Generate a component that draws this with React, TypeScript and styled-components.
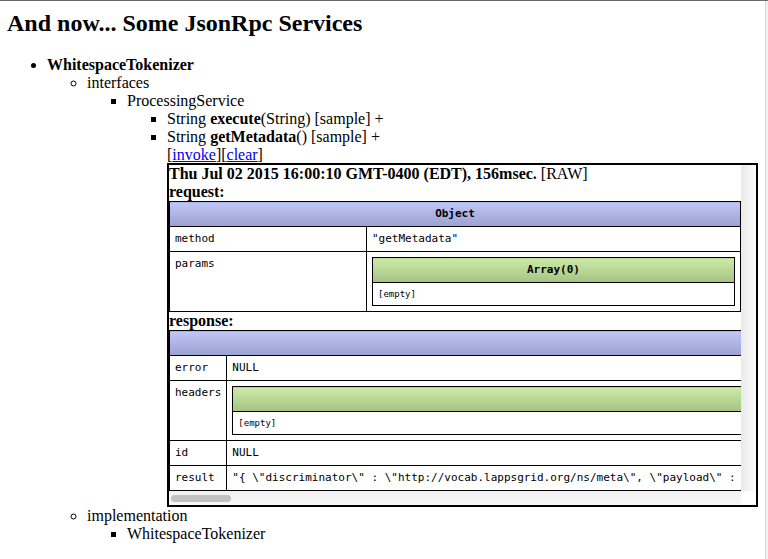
import React from "react";
import styled, { createGlobalStyle } from "styled-components";

const GlobalStyle = createGlobalStyle`
  html {
    overflow: hidden;
    border-top: 1px solid #6b6b6b;
    background: linear-gradient(
      to right,
      #ffffff 765px,
      #d6d6d6 765px,
      #d6d6d6 766px,
      #f1f1f1 766px
    );
  }
  body {
    margin: 0 10px 0 7px;
    font-family: "Liberation Serif", "Times New Roman", serif;
    font-size: 16px;
    color: #000;
  }
`;

const RESULT = String.raw`"{ \"discriminator\" : \"http://vocab.lappsgrid.org/ns/meta\", \"payload\" : { \"$schema\" : \"http://vocab.lappsgrid.org/schema/1.0.0/metadata-schema.json\", \"name\" : \"org.lappsgrid.example.java.whitespacetokenizer.WhitespaceTokenizer:1.0.0-SNAPSHOT\", \"version\" : \"1.0.0-SNAPSHOT\", \"toolVersion\" : \"1.0.0-SNAPSHOT\", \"vendor\" : \"http://www.lappsgrid.org\", \"allow\" : \"http://vocab.lappsgrid.org/ns/allow#any\", \"license\" : \"http://vocab.lappsgrid.org/ns/license#apache-2.0\", \"requires\" : { \"language\" : [ \"en\" ], \"format\" : [ \"http://vocab.lappsgrid.org/ns/media/text\", \"http://vocab.lappsgrid.org/ns/media/jsonld#lif\" ], \"annotations\" : [ ] }, \"produces\" : { \"language\" : [ \"en\" ], \"format\" : [ \"http://vocab.lappsgrid.org/ns/media/jsonld#lif\" ], \"annotations\" : [ \"http://vocab.lappsgrid.org/Token\" ] } } }"`;

const App = () => {
  return (
    <>
      <GlobalStyle />
      <S.Title>And now... Some JsonRpc Services</S.Title>
      <S.Tree $marker="disc">
        <S.Item>
          <b>WhitespaceTokenizer</b>
          <S.Tree $marker="circle">
            <S.Item>
              interfaces
              <S.Tree $marker="square">
                <S.Item>
                  ProcessingService
                  <S.Tree $marker="square">
                    <S.Item>
                      String <b>execute</b>(String) [sample] +
                    </S.Item>
                    <S.Item>
                      String <b>getMetadata</b>() [sample] +
                      <S.Actions>
                        [<S.Link href="#">invoke</S.Link>][
                        <S.Link href="#">clear</S.Link>]
                      </S.Actions>
                      <S.ResultBox>
                        <S.Viewport>
                          <S.Line>
                            <b>
                              Thu Jul 02 2015 16:00:10 GMT-0400 (EDT), 156msec.
                            </b>{" "}
                            [RAW]
                          </S.Line>
                          <S.Line>
                            <b>request:</b>
                          </S.Line>
                          <S.DataTable $fill>
                            <tbody>
                              <tr>
                                <S.Head colSpan={2} $tone="blue">
                                  Object
                                </S.Head>
                              </tr>
                              <tr>
                                <S.Key $width={186}>method</S.Key>
                                <S.Value>"getMetadata"</S.Value>
                              </tr>
                              <tr>
                                <S.Key $width={186}>params</S.Key>
                                <S.Value>
                                  <S.DataTable $fill>
                                    <tbody>
                                      <tr>
                                        <S.Head $tone="green">Array(0)</S.Head>
                                      </tr>
                                      <tr>
                                        <S.Empty>[empty]</S.Empty>
                                      </tr>
                                    </tbody>
                                  </S.DataTable>
                                </S.Value>
                              </tr>
                            </tbody>
                          </S.DataTable>
                          <S.Line>
                            <b>response:</b>
                          </S.Line>
                          <S.DataTable>
                            <tbody>
                              <tr>
                                <S.Head colSpan={2} $tone="blue">
                                  Object
                                </S.Head>
                              </tr>
                              <tr>
                                <S.Key>error</S.Key>
                                <S.Value>NULL</S.Value>
                              </tr>
                              <tr>
                                <S.Key>headers</S.Key>
                                <S.Value>
                                  <S.DataTable $fill>
                                    <tbody>
                                      <tr>
                                        <S.Head $tone="green">Object</S.Head>
                                      </tr>
                                      <tr>
                                        <S.Empty>[empty]</S.Empty>
                                      </tr>
                                    </tbody>
                                  </S.DataTable>
                                </S.Value>
                              </tr>
                              <tr>
                                <S.Key>id</S.Key>
                                <S.Value>NULL</S.Value>
                              </tr>
                              <tr>
                                <S.Key>result</S.Key>
                                <S.Value>{RESULT}</S.Value>
                              </tr>
                            </tbody>
                          </S.DataTable>
                        </S.Viewport>
                        <S.VTrack />
                        <S.HTrack>
                          <S.Thumb />
                        </S.HTrack>
                        <S.Corner />
                      </S.ResultBox>
                    </S.Item>
                  </S.Tree>
                </S.Item>
              </S.Tree>
            </S.Item>
            <S.Item>
              implementation
              <S.Tree $marker="square">
                <S.Item>WhitespaceTokenizer</S.Item>
              </S.Tree>
            </S.Item>
          </S.Tree>
        </S.Item>
      </S.Tree>
    </>
  );
};

export default App;

const S = {
  Title: styled.h1`
    font-size: 24px;
    font-weight: bold;
    margin: 9px 0 19px;
    line-height: 27px;
  `,
  Tree: styled.ul<{ $marker: string }>`
    list-style-type: ${(props) => props.$marker};
    margin: 0;
    padding-left: 40px;
  `,
  Item: styled.li`
    line-height: 18px;
  `,
  Actions: styled.div`
    line-height: 17px;
  `,
  Link: styled.a`
    color: #0000ee;
    text-decoration: underline;
  `,
  ResultBox: styled.div`
    display: grid;
    grid-template-columns: minmax(0, 1fr) 15px;
    grid-template-rows: auto 14px;
    border: 2px solid #000;
  `,
  Viewport: styled.div`
    overflow: hidden;
    min-width: 0;
  `,
  VTrack: styled.div`
    background: linear-gradient(to right, #e9e9e9, #fcfcfc);
  `,
  HTrack: styled.div`
    padding: 4px 2px 3px;
    background: linear-gradient(#f0f0f0, #f8f8f8);
  `,
  Thumb: styled.div`
    width: 60px;
    height: 7px;
    border-radius: 4px;
    background: #c1c1c1;
  `,
  Corner: styled.div`
    background: #fff;
  `,
  Line: styled.div`
    line-height: 18px;
    white-space: nowrap;
  `,
  DataTable: styled.table<{ $fill?: boolean }>`
    border-collapse: collapse;
    border: 1px solid #000;
    width: ${(props) => (props.$fill ? "100%" : "auto")};
    font-family: "DejaVu Sans Mono", "Liberation Mono", monospace;
    font-size: 11px;
    line-height: 14px;
  `,
  Head: styled.th<{ $tone: "blue" | "green" }>`
    border: 1px solid #000;
    padding: 5px;
    text-align: center;
    font-weight: bold;
    background: ${(props) =>
      props.$tone === "blue"
        ? "linear-gradient(#c0c7f6, #9ba1d1)"
        : "linear-gradient(#cdeaa7, #a4c383)"};
  `,
  Key: styled.td<{ $width?: number }>`
    border: 1px solid #000;
    padding: 5px;
    vertical-align: top;
    white-space: nowrap;
    width: ${(props) => (props.$width ? `${props.$width}px` : "auto")};
  `,
  Value: styled.td`
    border: 1px solid #000;
    padding: 5px;
    vertical-align: top;
    white-space: nowrap;
  `,
  Empty: styled.td`
    border: 1px solid #000;
    padding: 5px;
    font-size: 9px;
    line-height: 12px;
  `,
};
